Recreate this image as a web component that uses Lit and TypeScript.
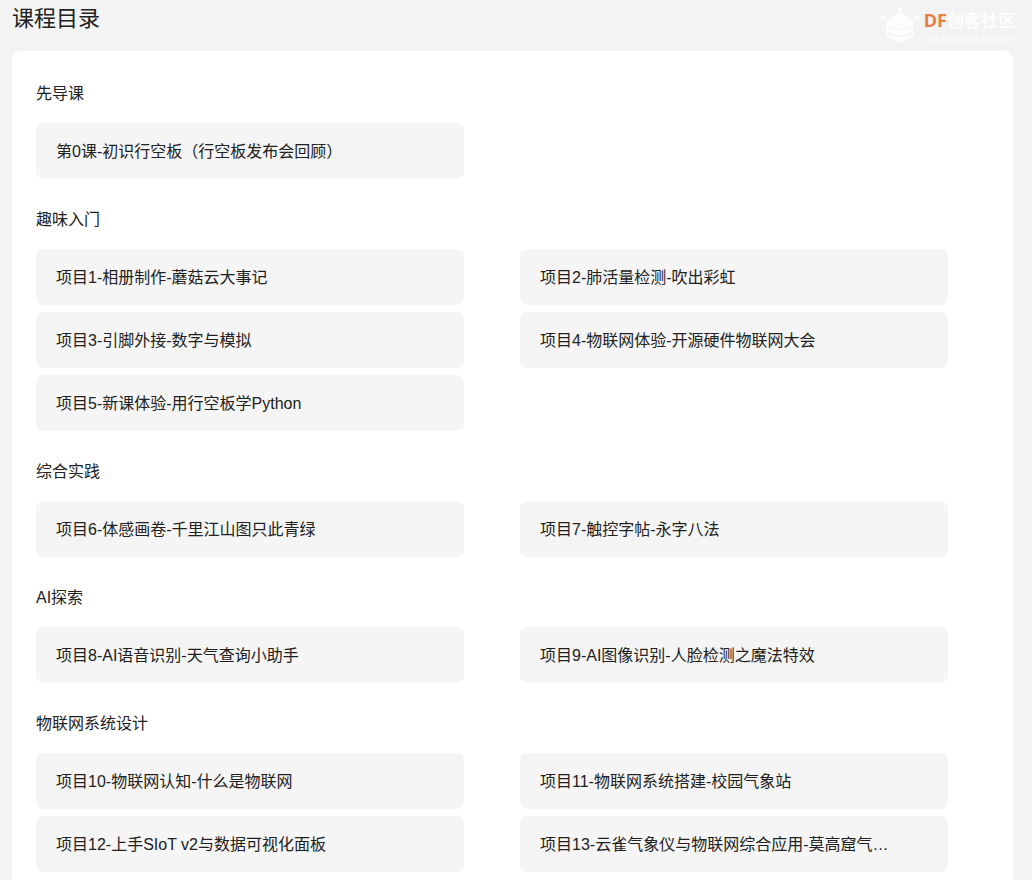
import { LitElement, html, css } from "lit";
import { customElement, property } from "lit/decorators.js";

interface Chapter {
  title: string;
  lessons: string[];
}

const CHAPTERS: Chapter[] = [
  { title: "先导课", lessons: ["第0课-初识行空板（行空板发布会回顾）"] },
  {
    title: "趣味入门",
    lessons: [
      "项目1-相册制作-蘑菇云大事记",
      "项目2-肺活量检测-吹出彩虹",
      "项目3-引脚外接-数字与模拟",
      "项目4-物联网体验-开源硬件物联网大会",
      "项目5-新课体验-用行空板学Python",
    ],
  },
  {
    title: "综合实践",
    lessons: ["项目6-体感画卷-千里江山图只此青绿", "项目7-触控字帖-永字八法"],
  },
  {
    title: "AI探索",
    lessons: ["项目8-AI语音识别-天气查询小助手", "项目9-AI图像识别-人脸检测之魔法特效"],
  },
  {
    title: "物联网系统设计",
    lessons: [
      "项目10-物联网认知-什么是物联网",
      "项目11-物联网系统搭建-校园气象站",
      "项目12-上手SIoT v2与数据可视化面板",
      "项目13-云雀气象仪与物联网综合应用-莫高窟气…",
    ],
  },
];

@customElement("community-logo")
export class CommunityLogo extends LitElement {
  static styles = css`
    :host {
      display: flex;
      align-items: flex-start;
      gap: 4px;
      color: #fdfdfd;
    }
    .robot {
      display: block;
      width: 40px;
      height: 38px;
    }
    .words {
      display: flex;
      flex-direction: column;
      padding-top: 4px;
    }
    .name {
      font: 700 17px/20px "Open Sans", "Noto Sans CJK SC", sans-serif;
      white-space: nowrap;
    }
    .brand {
      color: #e87e45;
      font-size: 18px;
    }
    .site {
      padding-left: 2px;
      font: 600 9px/16px "Open Sans", sans-serif;
    }
  `;

  render() {
    return html`
      <svg class="robot" viewBox="0 0 40 38" aria-hidden="true">
        <g fill="none" stroke="currentColor" stroke-width="1.5">
          <path d="M20 3v7M8 15 3 12M32 15l5-3" />
        </g>
        <g fill="currentColor">
          <circle cx="20" cy="3" r="2.2" />
          <circle cx="2.5" cy="12" r="2.1" />
          <circle cx="37.5" cy="12" r="2.1" />
          <path
            fill-rule="evenodd"
            d="M17 7.500q3-1.500 6 0L33.500 14v16L20 37 6.500 30V14zM8.500 21v5.500q0 1.500 1.500 2l3 1.500q7 1.500 14 0l3-1.500q1.500-.5 1.500-2V21q-11.500 3.500-23 0z"
          />
          <path d="M9.500 22.300q10.500 2.700 21 0v4q0 .8-1 1.200l-3 1.300q-6.500 1.400-13 0l-3-1.300q-1-.4-1-1.200z" />
        </g>
      </svg>
      <span class="words">
        <span class="name"><span class="brand">DF</span>创客社区</span>
        <span class="site">mc.DFRobot.com.cn</span>
      </span>
    `;
  }
}

@customElement("course-chapter")
export class CourseChapter extends LitElement {
  @property({ attribute: false }) chapter!: Chapter;

  static styles = css`
    :host {
      display: block;
    }
    .title {
      margin: 0 0 17px;
      font-size: 16px;
      line-height: 24px;
      font-weight: 400;
    }
    .lessons {
      display: grid;
      grid-template-columns: repeat(2, minmax(0, 1fr));
      gap: 7px 56px;
      margin: 0;
      padding: 0;
      list-style: none;
    }
    .lesson {
      display: block;
      padding: 17px 20px 15px;
      border-radius: 7px;
      background: #f5f5f5;
      color: inherit;
      font-size: 16px;
      line-height: 24px;
      text-decoration: none;
      white-space: nowrap;
      overflow: hidden;
      text-overflow: ellipsis;
    }
  `;

  render() {
    return html`
      <h2 class="title">${this.chapter.title}</h2>
      <ul class="lessons">
        ${this.chapter.lessons.map(
          (name) => html`<li><a class="lesson" href="#">${name}</a></li>`
        )}
      </ul>
    `;
  }
}

@customElement("app-root")
export class AppRoot extends LitElement {
  static styles = css`
    :host {
      display: block;
      box-sizing: border-box;
      min-height: 100vh;
      padding: 0 19px 0 12px;
      background: #f3f3f3;
      color: #212121;
      font-family: "Liberation Sans", "Noto Sans CJK SC", sans-serif;
    }
    .head {
      display: flex;
      justify-content: space-between;
      align-items: flex-start;
      height: 51px;
    }
    .heading {
      margin: 0;
      padding-top: 3px;
      font-size: 22px;
      line-height: 32px;
      font-weight: 400;
    }
    .logo {
      padding-top: 6px;
      margin-right: -2px;
    }
    .catalog {
      display: flex;
      flex-direction: column;
      gap: 29px;
      padding: 31px 65px 24px 24px;
      border-radius: 9px;
      background: #fff;
    }
  `;

  render() {
    return html`
      <header class="head">
        <h1 class="heading">课程目录</h1>
        <community-logo class="logo"></community-logo>
      </header>
      <main class="catalog">
        ${CHAPTERS.map((c) => html`<course-chapter .chapter=${c}></course-chapter>`)}
      </main>
    `;
  }
}
